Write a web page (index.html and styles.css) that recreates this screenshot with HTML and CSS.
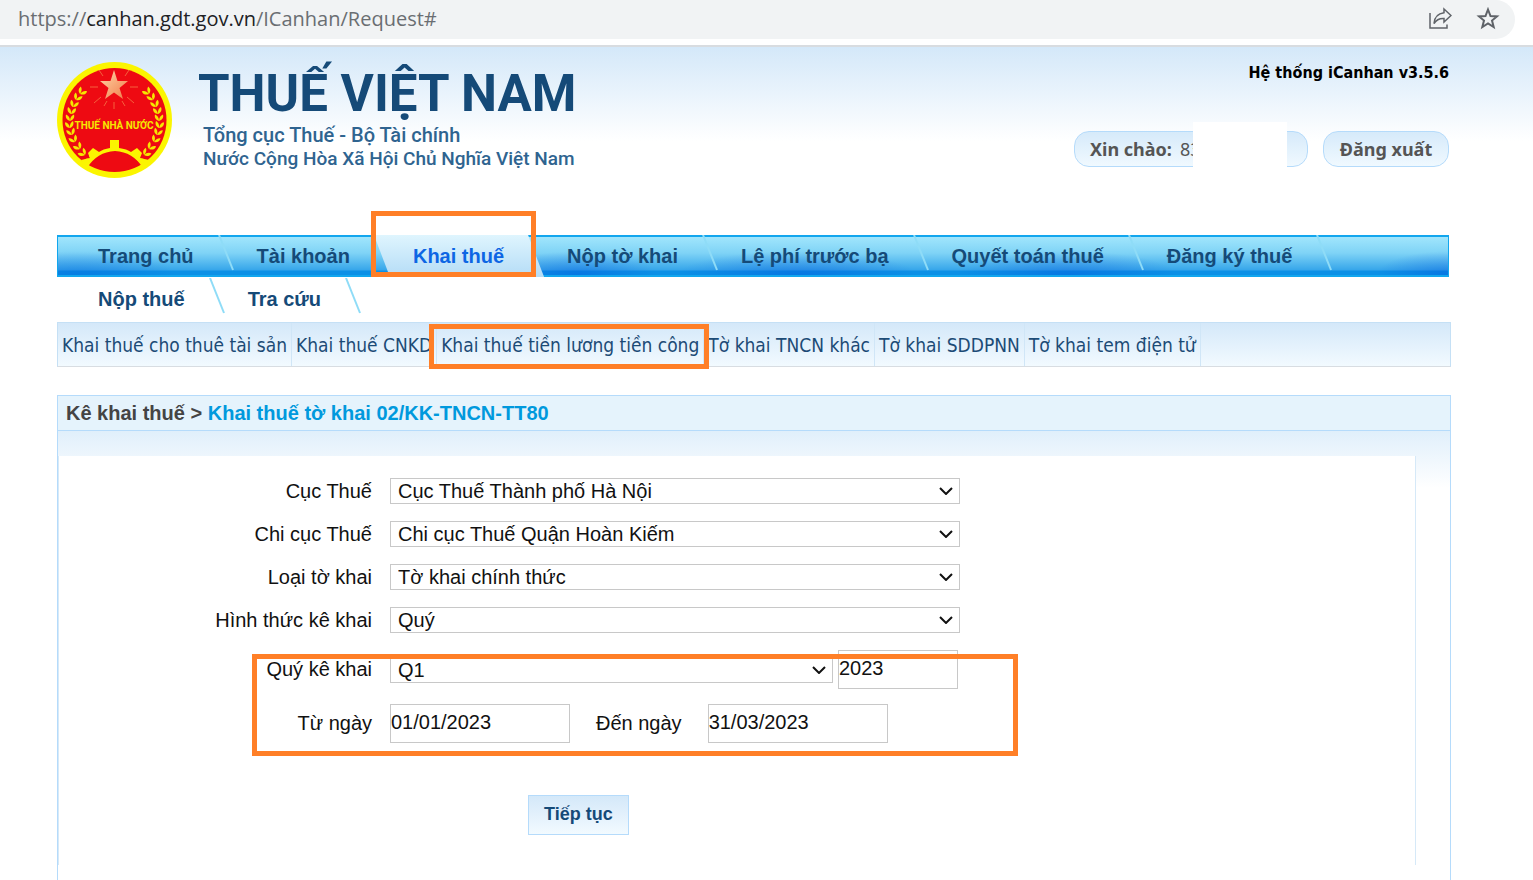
FILE: index.html
```
<!DOCTYPE html>
<html lang="vi">

<head>
    <meta charset="UTF-8">
    <meta name="viewport" content="width=device-width, initial-scale=1.0">
    <title>Thuế Việt Nam - iCanhan</title>
    <link rel="stylesheet" href="styles.css">
</head>

<body>
    <div class="browser-bar">
        <div class="address">
            <span class="url">https://<b>canhan.gdt.gov.vn</b>/ICanhan/Request#</span>
            <button class="bar-btn" type="button" aria-label="Share">
                <svg width="24" height="24" viewBox="0 0 24 24" fill="none" stroke="#5f6368" stroke-width="1.5">
                    <path d="M2 6V21H19V17.500" />
                    <path d="M16 2L23 8.500L16 15V11.500C11.500 11.200 8.500 12.500 6 16.500C6.500 10 9.500 6.500 16 5.700Z" />
                </svg>
            </button>
            <button class="bar-btn" type="button" aria-label="Bookmark">
                <svg width="24" height="24" viewBox="0 0 24 24" fill="none" stroke="#5f6368" stroke-width="2">
                    <path d="M12 2.500L14.500 9L21 9.400L16 13.600L17.700 20L12 16.500L6.300 20L8 13.600L3 9.400L9.500 9Z" />
                </svg>
            </button>
        </div>
    </div>

    <div class="page">
        <header class="header">
            <svg class="emblem" width="116" height="118" viewBox="0 0 116 118">
                <defs>
                    <g id="leaf">
                        <path d="M0 0C-4 -1 -6 -4 -5 -8C-2 -7 0 -4 0 0Z" />
                        <path d="M0 0C4 -1 6 -4 5 -8C2 -7 0 -4 0 0Z" />
                    </g>
                    <g id="laurel" fill="#f5e800">
                        <use href="#leaf" transform="translate(35 98) rotate(-55) scale(.8)" />
                        <use href="#leaf" transform="translate(28 93) rotate(-46) scale(.8)" />
                        <use href="#leaf" transform="translate(23 87) rotate(-38) scale(.8)" />
                        <use href="#leaf" transform="translate(18 80) rotate(-28) scale(.8)" />
                        <use href="#leaf" transform="translate(15 73) rotate(-18) scale(.8)" />
                        <use href="#leaf" transform="translate(13 66) rotate(-9) scale(.8)" />
                        <use href="#leaf" transform="translate(13 59) scale(.8)" />
                        <use href="#leaf" transform="translate(14 52) rotate(9) scale(.8)" />
                        <use href="#leaf" transform="translate(16 45) rotate(19) scale(.8)" />
                        <use href="#leaf" transform="translate(19 38) rotate(29) scale(.8)" />
                        <use href="#leaf" transform="translate(23 32) rotate(38) scale(.8)" />
                    </g>
                    <linearGradient id="starFill" x1="0" y1="0" x2="1" y2="1">
                        <stop offset="0" stop-color="#ffd9a8" />
                        <stop offset="1" stop-color="#f07a4a" />
                    </linearGradient>
                </defs>
                <ellipse cx="57.500" cy="58" rx="57.500" ry="58" fill="#fbf500" />
                <ellipse cx="57.500" cy="58" rx="52" ry="52" fill="#ee0a12" />
                <g stroke="#f5603c" stroke-width="1">
                    <path d="M46 14L42 8M68 14L72 8M41 25L33 25M73 25L81 25M44 35L37 41M70 35L77 41M57 40V47M50 39L47 44M65 39L68 44" />
                </g>
                <path d="M57 8L60.500 19H71L62.500 26L66 37L57 30.500L48 37L51.500 26L43 19H53.500Z" fill="url(#starFill)" />
                <use href="#laurel" />
                <use href="#laurel" transform="translate(115 0) scale(-1 1)" />
                <path d="M24 98L33 96L31 91L36 86L42 90Q46 87 53 86V78H62V86Q70 87 74 90L80 86L85 91L83 96L92 98L86 106Q76 90 58 89Q40 90 30 106Z" fill="#fbf500" />
                <text class="emblem-text" x="57" y="67" text-anchor="middle">THUẾ NHÀ NƯỚC</text>
            </svg>
            <div class="brand">
                <h1>THUẾ VIỆT NAM</h1>
                <p>Tổng cục Thuế - Bộ Tài chính</p>
                <p class="country">Nước Cộng Hòa Xã Hội Chủ Nghĩa Việt Nam</p>
            </div>
            <div class="account">
                <div class="version">Hệ thống iCanhan v3.5.6</div>
                <div class="account-row">
                    <div class="pill hello"><b>Xin chào:</b>83<span class="cover"></span></div>
                    <button class="pill logout" type="button">Đăng xuất</button>
                </div>
            </div>
        </header>

        <nav>
            <ul class="menu">
                <li><a href="#">Trang chủ</a><svg class="slash" viewBox="0 0 16 36"><path d="M1 0L15 35" /></svg></li>
                <li><a href="#">Tài khoản</a><svg class="slash" viewBox="0 0 16 36"></svg></li>
                <li class="active"><a href="#">Khai thuế</a><svg class="slash" viewBox="0 0 16 36"></svg><span class="mark mark-menu"></span></li>
                <li><a href="#">Nộp tờ khai</a><svg class="slash" viewBox="0 0 16 36"><path d="M1 0L15 35" /></svg></li>
                <li><a href="#">Lệ phí trước bạ</a><svg class="slash" viewBox="0 0 16 36"><path d="M1 0L15 35" /></svg></li>
                <li><a href="#">Quyết toán thuế</a><svg class="slash" viewBox="0 0 16 36"><path d="M1 0L15 35" /></svg></li>
                <li><a href="#">Đăng ký thuế</a><svg class="slash" viewBox="0 0 16 36"><path d="M1 0L15 35" /></svg></li>
                <li class="second"><a href="#">Nộp thuế</a><svg class="slash" viewBox="0 0 16 36"><path d="M1 0L15 35" /></svg></li>
                <li class="second"><a href="#">Tra cứu</a><svg class="slash" viewBox="0 0 16 36"><path d="M1 0L15 35" /></svg></li>
            </ul>
            <ul class="submenu">
                <li><a href="#">Khai thuế cho thuê tài sản</a></li>
                <li><a href="#">Khai thuế CNKD</a></li>
                <li><a href="#">Khai thuế tiền lương tiền công</a><span class="mark mark-submenu"></span></li>
                <li><a href="#">Tờ khai TNCN khác</a></li>
                <li><a href="#">Tờ khai SDDPNN</a></li>
                <li><a href="#">Tờ khai tem điện tử</a></li>
            </ul>
        </nav>

        <main class="panel">
            <h2 class="panel-title">Kê khai thuế &gt; <a href="#">Khai thuế tờ khai 02/KK-TNCN-TT80</a></h2>
            <div class="panel-body">
                <form class="form">
                    <div class="row">
                        <label for="cuc">Cục Thuế</label>
                        <div class="select">
                            <select id="cuc"><option>Cục Thuế Thành phố Hà Nội</option></select>
                            <svg class="arrow" viewBox="0 0 14 8"><path d="M1 1L7 7L13 1" /></svg>
                        </div>
                    </div>
                    <div class="row">
                        <label for="chicuc">Chi cục Thuế</label>
                        <div class="select">
                            <select id="chicuc"><option>Chi cục Thuế Quận Hoàn Kiếm</option></select>
                            <svg class="arrow" viewBox="0 0 14 8"><path d="M1 1L7 7L13 1" /></svg>
                        </div>
                    </div>
                    <div class="row">
                        <label for="loai">Loại tờ khai</label>
                        <div class="select">
                            <select id="loai"><option>Tờ khai chính thức</option></select>
                            <svg class="arrow" viewBox="0 0 14 8"><path d="M1 1L7 7L13 1" /></svg>
                        </div>
                    </div>
                    <div class="row">
                        <label for="hinhthuc">Hình thức kê khai</label>
                        <div class="select">
                            <select id="hinhthuc"><option>Quý</option></select>
                            <svg class="arrow" viewBox="0 0 14 8"><path d="M1 1L7 7L13 1" /></svg>
                        </div>
                    </div>
                    <div class="period">
                        <div class="row">
                            <label for="quy">Quý kê khai</label>
                            <div class="select quarter">
                                <select id="quy"><option>Q1</option></select>
                                <svg class="arrow" viewBox="0 0 14 8"><path d="M1 1L7 7L13 1" /></svg>
                            </div>
                            <input class="year" type="text" value="2023" aria-label="Năm">
                        </div>
                        <div class="row">
                            <label for="tungay">Từ ngày</label>
                            <input class="date" id="tungay" type="text" value="01/01/2023">
                            <label class="to" for="denngay">Đến ngày</label>
                            <input class="date" id="denngay" type="text" value="31/03/2023">
                        </div>
                        <span class="mark mark-period"></span>
                    </div>
                    <button class="next" type="button">Tiếp tục</button>
                </form>
            </div>
        </main>
    </div>
</body>

</html>
```
FILE: styles.css
```
* {
    box-sizing: border-box;
}

body {
    margin: 0;
    overflow-x: hidden;
    font-family: "Liberation Sans", Arial, sans-serif;
    font-size: 20px;
    color: #111;
    background: #fff;
}

a {
    text-decoration: none;
}

ul {
    margin: 0;
    padding: 0;
    list-style: none;
}

/* browser bar */
.browser-bar {
    height: 47px;
    padding-right: 18px;
    border-bottom: 2px solid #d8dce0;
}

.address {
    display: flex;
    align-items: center;
    gap: 24px;
    height: 39px;
    padding: 0 15px 2px 18px;
    border-radius: 0 20px 20px 0;
    background: #f1f3f4;
}

.url {
    flex: 1;
    font-family: "Open Sans", sans-serif;
    font-size: 20px;
    color: #6a6e72;
}

.url b {
    font-weight: normal;
    color: #202124;
}

.bar-btn {
    display: flex;
    padding: 0;
    border: 0;
    background: none;
}

/* header */
.page {
    padding: 15px 82px 0 57px;
    background: linear-gradient(#d4e8f9, #fff 94px);
}

.header {
    display: flex;
    height: 173px;
}

.emblem {
    flex: none;
}

.emblem-text {
    font-family: Roboto, sans-serif;
    font-size: 10px;
    font-weight: bold;
    fill: #f5e800;
}

.brand {
    flex: 1;
    padding-left: 25px;
    font-family: Roboto, sans-serif;
    color: #2f6490;
}

.brand h1 {
    margin: 0;
    padding-top: 2px;
    font-size: 51px;
    line-height: 59px;
    color: #154a78;
}

.brand p {
    margin: 0;
    padding-left: 5px;
    font-size: 20px;
    font-weight: 500;
    line-height: 24px;
}

.brand .country {
    font-size: 19px;
}

.account {
    padding-right: 2px;
    font-family: "Noto Sans", sans-serif;
    text-align: right;
}

.version {
    height: 54px;
    font-family: "DejaVu Sans Condensed", sans-serif;
    font-size: 16px;
    font-weight: bold;
    line-height: 22px;
    color: #000;
}

.account-row {
    display: flex;
    justify-content: flex-end;
    gap: 15px;
    padding-top: 15px;
}

.pill {
    height: 36px;
    border: 1px solid #b5dbfb;
    border-radius: 15px;
    background: linear-gradient(#d6eafa, #f0f9ff);
    font-family: "Noto Sans", sans-serif;
    font-size: 18px;
    line-height: 34px;
    color: #555;
}

.hello {
    position: relative;
    width: 234px;
    padding-left: 15px;
    text-align: left;
}

.hello b {
    margin-right: 8px;
}

.cover {
    position: absolute;
    top: -10px;
    right: 20px;
    width: 94px;
    height: 47px;
    background: #fff;
}

.logout {
    width: 126px;
    padding: 0;
    font-weight: bold;
}

/* menu */
.menu {
    display: flex;
    flex-wrap: wrap;
    margin-right: 2px;
    padding-left: 18px;
    background:
        linear-gradient(#12a6ee, #12a6ee) 0 0 / 100% 2px,
        linear-gradient(#12a6ee, #12a6ee) 0 40px / 100% 2px,
        linear-gradient(#12a6ee, #12a6ee) 0 0 / 1px 42px,
        linear-gradient(#12a6ee, #12a6ee) 100% 0 / 1px 42px,
        radial-gradient(50% 100% at 50% 100%, rgba(0, 96, 220, .4), transparent) -80px 16px / 200px 24px,
        radial-gradient(50% 100% at 50% 100%, rgba(0, 80, 220, .4), transparent) 440px 16px / 160px 24px,
        radial-gradient(50% 100% at 50% 100%, rgba(0, 80, 220, .4), transparent) 620px 16px / 240px 24px,
        radial-gradient(50% 100% at 50% 100%, rgba(0, 80, 220, .4), transparent) 900px 16px / 220px 24px,
        radial-gradient(50% 100% at 50% 100%, rgba(0, 80, 220, .4), transparent) 1320px 16px / 140px 24px,
        linear-gradient(#a5e8fd, #7fd3f6 18px, #36a6ea 35px, #0c90e6 36px, #0c90e6 42px) 0 0 / 100% 42px;
    background-repeat: no-repeat;
}

.menu li {
    position: relative;
    display: flex;
    height: 42px;
}

.menu a {
    position: relative;
    padding: 0 24px 0 23px;
    font-weight: bold;
    line-height: 42px;
    color: #154a78;
}

.slash {
    width: 16px;
    height: 36px;
    fill: none;
    stroke: #8fdcf7;
    stroke-width: 2;
}

.menu .active::before {
    content: "";
    position: absolute;
    top: 0;
    right: 0;
    bottom: 0;
    left: -16px;
    background: linear-gradient(#dff5fe, #b4dcf6);
    clip-path: polygon(0 0, calc(100% - 16px) 0, 100% 100%, 16px 100%);
}

.menu .active a {
    color: #0d66e4;
}

.menu .second {
    height: 36px;
    margin-top: 1px;
}

/* orange highlight frames */
.mark {
    position: absolute;
    z-index: 1;
    border: 5px solid #ff7f27;
    pointer-events: none;
}

.mark-menu {
    top: -24px;
    right: 8px;
    bottom: 0;
    left: -19px;
}

.submenu {
    display: flex;
    height: 45px;
    margin-top: 8px;
    border: 1px solid #c5e0f5;
    border-bottom-color: #d8dde2;
    background: linear-gradient(#d4e8f9, #f2faff);
}

.submenu li {
    position: relative;
    padding: 0 4px;
    border-right: 1px solid #d0e6f7;
}

.submenu a {
    font-family: "DejaVu Sans Condensed", sans-serif;
    font-size: 19px;
    line-height: 44px;
    white-space: nowrap;
    color: #1c4b76;
}

.mark-submenu {
    top: 1px;
    right: -6px;
    bottom: -3px;
    left: -8px;
}

/* content */
.panel {
    margin-top: 28px;
    border: 1px solid #b5dbfb;
    border-bottom: 0;
    background: linear-gradient(#e0effb 35px, #fff 92px);
}

.panel-title {
    margin: 0;
    padding-left: 8px;
    border-bottom: 1px solid #b5dbfb;
    background: #e5f3fc;
    font-size: 20px;
    line-height: 34px;
    color: #444;
}

.panel-title a {
    color: #0099dd;
}

.panel-body {
    padding: 25px 34px 15px 0;
}

.form {
    min-height: 409px;
    padding-top: 22px;
    border: 1px solid #d6e9f8;
    border-width: 0 1px;
    background: #fff;
}

.row {
    display: flex;
    align-items: center;
    margin-bottom: 17px;
}

.row label {
    width: 313px;
    margin-right: 18px;
    text-align: right;
}

.row .to {
    width: auto;
    margin: 0 26px;
}

.select {
    position: relative;
    width: 570px;
}

.select select {
    display: block;
    width: 100%;
    height: 26px;
    padding: 0 30px 0 7px;
    border: 1px solid #c8c8c8;
    border-radius: 0;
    appearance: none;
    background: #fff;
    font-family: inherit;
    font-size: 20px;
    color: #111;
}

.arrow {
    position: absolute;
    top: 9px;
    right: 7px;
    width: 14px;
    height: 8px;
    fill: none;
    stroke: #111;
    stroke-width: 2;
    pointer-events: none;
}

.row .quarter {
    width: 443px;
    margin-right: 5px;
}

.row input {
    height: 39px;
    padding: 0 0 3px;
    border: 1px solid #c8c8c8;
    font-family: inherit;
    font-size: 20px;
    color: #111;
}

.year {
    width: 120px;
}

.date {
    width: 180px;
}

.period {
    position: relative;
}

.period .row {
    margin-bottom: 15px;
}

.mark-period {
    top: 4px;
    left: 193px;
    width: 766px;
    height: 102px;
}

.next {
    display: block;
    height: 40px;
    margin: 52px 0 0 469px;
    padding: 0 15px 2px;
    border: 1px solid #b5dbfb;
    background: linear-gradient(#d4e8f9, #f2faff);
    font-family: inherit;
    font-size: 18px;
    font-weight: bold;
    color: #154a78;
}
```
